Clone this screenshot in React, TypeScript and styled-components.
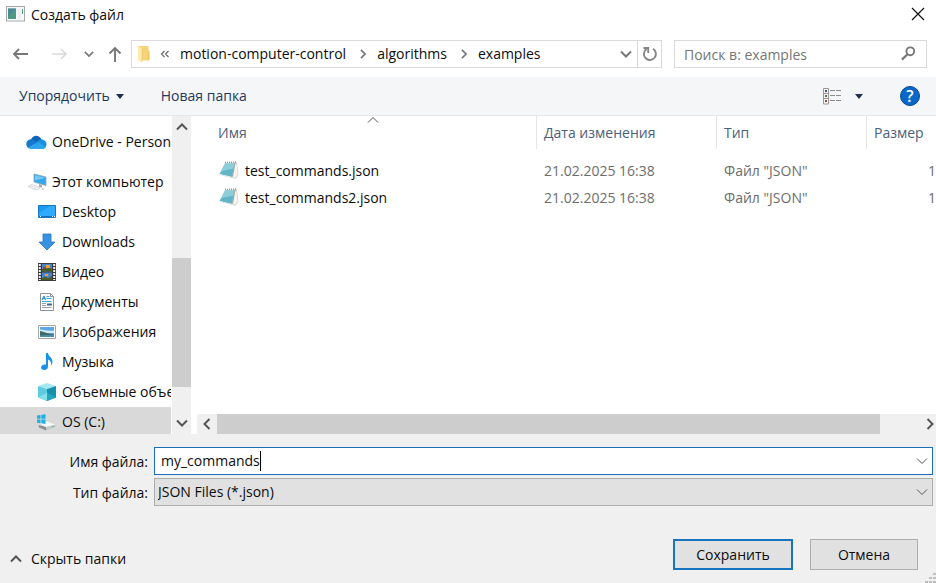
import React, { useState } from "react";
import styled, { createGlobalStyle } from "styled-components";

const GlobalStyle = createGlobalStyle`
  *, *::before, *::after { box-sizing: border-box; }
  body { margin: 0; background: #fff; }
  body, button, input, select {
    font-family: "Open Sans", "Noto Sans", sans-serif;
    font-size: 14px;
    line-height: 20px;
    color: #0c0c0c;
  }
  button { background: none; border: 0; padding: 0; margin: 0; }
  svg { display: block; flex: none; }
`;

const Dialog = styled.main`
  display: flex;
  flex-direction: column;
  height: 100vh;
  min-height: 440px;
  overflow: hidden;
  background: #fff;
`;

const TitleBar = styled.header`
  display: flex;
  align-items: center;
  gap: 6px;
  height: 28px;
  padding: 0 11px 0 6px;
`;

const Title = styled.h1`
  flex: 1;
  margin: 0;
  padding-top: 2px;
  font-size: 14px;
  font-weight: 400;
  line-height: 20px;
`;

const NavBar = styled.nav`
  display: flex;
  align-items: center;
  height: 49px;
  padding: 2px 9px 0 12px;
`;

const NavButton = styled.button<{ $gap: number }>`
  display: flex;
  flex: none;
  margin-right: ${(p) => p.$gap}px;
`;

const AddressBar = styled.div`
  display: flex;
  align-items: center;
  flex: 1;
  min-width: 0;
  height: 28px;
  margin-right: 12px;
  padding-left: 5px;
  border: 1px solid #d9d9d9;
`;

const Crumbs = styled.ol`
  display: flex;
  align-items: center;
  flex: 1;
  gap: 10px;
  min-width: 0;
  margin: 0;
  padding: 0 0 0 10px;
  overflow: hidden;
  list-style: none;
`;

const Crumb = styled.li`
  display: flex;
  align-items: center;
  gap: 9px;
  white-space: nowrap;
`;

const CrumbButton = styled.button`
  font-size: 14px;
  padding-right: 2px;
`;

const RefreshButton = styled.button`
  display: flex;
  align-items: center;
  justify-content: center;
  width: 24px;
  height: 26px;
  margin-left: 5px;
  border-left: 1px solid #d9d9d9;
`;

const SearchBox = styled.label`
  display: flex;
  align-items: center;
  flex: 0 1 253px;
  height: 28px;
  padding: 0 10px 0 9px;
  border: 1px solid #d9d9d9;
`;

const SearchInput = styled.input`
  flex: 1;
  min-width: 0;
  padding: 2px 0 0;
  border: 0;
  outline: 0;
  background: none;
  &::placeholder { color: #757575; opacity: 1; }
`;

const Toolbar = styled.div`
  display: flex;
  align-items: center;
  height: 39px;
  padding: 0 16px 0 19px;
  background: #f5f6f7;
  border-bottom: 1px solid #e6e8e9;
`;

const ToolButton = styled.button<{ $gap?: number; $push?: boolean }>`
  display: flex;
  align-items: center;
  gap: 6px;
  margin-right: ${(p) => p.$gap ?? 0}px;
  margin-left: ${(p) => (p.$push ? "auto" : "0")};
  color: #1e395b;
`;

const HelpButton = styled.button`
  display: flex;
  align-items: center;
  justify-content: center;
  width: 20px;
  height: 20px;
  border: 1px solid #0a4a94;
  border-radius: 50%;
  background: #0a66c8;
  color: #fff;
  font-size: 16px;
  font-weight: 600;
`;

const Body = styled.div`
  display: flex;
  flex: 1;
  min-height: 0;
`;

const Sidebar = styled.aside`
  display: flex;
  width: 197px;
  flex: none;
  overflow: hidden;
`;

const Tree = styled.ul`
  flex: 1;
  min-width: 0;
  margin: 0;
  padding: 11px 1px 0 0;
  overflow: hidden;
  list-style: none;
`;

const TreeNode = styled.li<{ $root?: boolean }>`
  margin-bottom: ${(p) => (p.$root ? 10 : 0)}px;
`;

const TreeButton = styled.button<{ $depth: number; $selected?: boolean }>`
  display: flex;
  align-items: center;
  gap: ${(p) => (p.$depth ? 6 : 5)}px;
  width: 100%;
  height: 30px;
  padding-left: ${(p) => (p.$depth ? 37 : 26)}px;
  overflow: hidden;
  white-space: nowrap;
  background: ${(p) => (p.$selected ? "#d9d9d9" : "transparent")};
`;

const VerticalTrack = styled.div`
  display: flex;
  flex-direction: column;
  align-items: center;
  width: 19px;
  margin-right: 6px;
  background: #f0f0f0;
`;

const HorizontalTrack = styled.div`
  display: flex;
  align-items: center;
  height: 20px;
  background: #f0f0f0;
`;

const ScrollButton = styled.button<{ $end?: boolean }>`
  display: flex;
  align-items: center;
  justify-content: ${(p) => (p.$end ? "flex-end" : "center")};
  flex: none;
  width: 20px;
  height: 22px;
`;

const Rail = styled.div<{ $vertical?: boolean }>`
  display: flex;
  flex-direction: ${(p) => (p.$vertical ? "column" : "row")};
  flex: 1;
  align-self: stretch;
`;

const Space = styled.div<{ $grow: number }>`
  flex: ${(p) => p.$grow} 1 0;
`;

const Thumb = styled.div<{ $grow: number }>`
  flex: ${(p) => p.$grow} 1 0;
  background: #cdcdcd;
`;

const FilePane = styled.section`
  display: flex;
  flex-direction: column;
  flex: 1;
  min-width: 0;
`;

const TableArea = styled.div`
  flex: 1;
  min-height: 0;
  overflow: hidden;
`;

const FileTable = styled.table`
  width: 100%;
  table-layout: fixed;
  border-collapse: separate;
  border-spacing: 0;
  thead tr { height: 33px; }
  tbody tr { height: 27px; }
  tbody::before { content: ""; display: block; height: 8px; }
`;

const HeadCell = styled.th<{ $width?: number; $first?: boolean }>`
  position: relative;
  width: ${(p) => (p.$width ? `${p.$width}px` : "auto")};
  padding: 1px 0 0 ${(p) => (p.$first ? 21 : 7)}px;
  border-left: ${(p) => (p.$first ? "0" : "1px solid #e5e5e5")};
  color: #4c607a;
  font-weight: 400;
  text-align: left;
  white-space: nowrap;
`;

const SortMark = styled.span`
  position: absolute;
  top: -2px;
  left: 50%;
`;

const Cell = styled.td<{ $name?: boolean; $end?: boolean }>`
  padding: 0 0 0 ${(p) => (p.$name ? 22 : 8)}px;
  color: ${(p) => (p.$name ? "#0c0c0c" : "#6d6d6d")};
  text-align: ${(p) => (p.$end ? "right" : "left")};
  white-space: nowrap;
`;

const FileName = styled.div`
  display: flex;
  align-items: center;
  gap: 6px;
`;

const Footer = styled.footer`
  padding: 13px 3px 0 0;
  background: #f0f0f0;
`;

const Fields = styled.div`
  display: grid;
  grid-template-columns: 148px 1fr;
  column-gap: 6px;
  row-gap: 3px;
  align-items: center;
`;

const FieldLabel = styled.label`
  padding-top: 1px;
  text-align: right;
  white-space: nowrap;
`;

const NameBox = styled.div`
  display: flex;
  align-items: center;
  height: 28px;
  padding: 0 4px 0 6px;
  background: #fff;
  border: 1px solid #1c6fb5;
`;

const NameInput = styled.input`
  field-sizing: content;
  min-width: 1px;
  padding: 0;
  border: 0;
  outline: 0;
  background: none;
  caret-color: transparent;
`;

const Caret = styled.span`
  width: 1px;
  height: 20px;
  background: #000;
`;

const DropButton = styled.button`
  display: flex;
  margin-left: auto;
`;

const TypeBox = styled.div`
  position: relative;
  height: 28px;
`;

const TypeSelect = styled.select`
  appearance: none;
  display: block;
  width: 100%;
  height: 28px;
  padding: 0 24px 0 3px;
  border: 1px solid #adadad;
  border-radius: 0;
  background: #e1e1e1;
`;

const TypeArrow = styled.span`
  position: absolute;
  top: 8px;
  right: 5px;
  pointer-events: none;
`;

const Actions = styled.div`
  display: flex;
  align-items: center;
  gap: 17px;
  height: 77px;
  padding: 20px 15px 0 10px;
`;

const HideButton = styled.button`
  display: flex;
  align-items: center;
  gap: 9px;
  margin: 8px auto 0 0;
`;

const ActionButton = styled.button<{ $primary?: boolean }>`
  width: ${(p) => (p.$primary ? 120 : 108)}px;
  height: 31px;
  background: #e1e1e1;
  border: ${(p) => (p.$primary ? "2px solid #1874bd" : "1px solid #adadad")};
`;

const GripCorner = styled.div`
  position: fixed;
  right: 0;
  bottom: 0;
`;

type Dir = "up" | "down" | "left" | "right";

const chevrons: Record<Dir, string> = {
  up: "M1 8.5 6 3.5l5 5",
  down: "M1 3.5 6 8.5l5-5",
  left: "M8.5 1 3.5 6l5 5",
  right: "M3.5 1 8.5 6l-5 5",
};

const Chevron = ({ dir, size = 12, color = "#555", weight = 2 }: { dir: Dir; size?: number; color?: string; weight?: number }) => (
  <svg width={size} height={size} viewBox="0 0 12 12" fill="none" stroke={color} strokeWidth={weight}>
    <path d={chevrons[dir]} />
  </svg>
);

const Triangle = () => (
  <svg width="8" height="5" viewBox="0 0 8 5"><path d="M0 0h8L4 5z" fill="#1e2f50" /></svg>
);

const AppIcon = () => (
  <svg width="19" height="16" viewBox="0 0 19 16">
    <rect x=".5" y=".5" width="18" height="14.5" fill="#f8f9fa" stroke="#a5a9ae" />
    <rect x="2" y="2.500" width="8" height="10.500" fill="#4f9a84" />
    <path d="M2 2.500h8L2 11z" fill="#4a82a0" opacity=".7" />
    <path d="M12 2.500h3V13h-3z" fill="#eceff1" />
    <path d="M16.500 3v5" stroke="#55a36f" />
  </svg>
);

const ArrowLeft = () => (
  <svg width="17" height="14" viewBox="0 0 17 14" fill="none" stroke="#767676" strokeWidth="1.8"><path d="M16 7H2M7 2 2 7l5 5" /></svg>
);
const ArrowRight = () => (
  <svg width="17" height="14" viewBox="0 0 17 14" fill="none" stroke="#dadada" strokeWidth="1.6"><path d="M1 7h14M10 2l5 5-5 5" /></svg>
);
const ArrowUp = () => (
  <svg width="14" height="16" viewBox="0 0 14 16" fill="none" stroke="#767676" strokeWidth="1.9"><path d="M7 16V2M1.500 7.500 7 2l5.500 5.500" /></svg>
);

const CloseIcon = () => (
  <svg width="14" height="14" viewBox="0 0 14 14" stroke="#111" strokeWidth="1.2"><path d="m1 1 12 12M13 1 1 13" /></svg>
);

const FolderIcon = () => (
  <svg width="13" height="18" viewBox="0 0 13 18">
    <path d="M1 1h10.500v14.500H4z" fill="#f5d477" />
    <path d="M11 5.500 12.500 6v9.500H11z" fill="#efc65f" />
    <path d="m1 1 4 2.500V17.500L1 15.500z" fill="#fdebb2" />
    <path d="M5 3.500V17" stroke="#ebc364" strokeWidth=".6" />
  </svg>
);

const BackChevrons = () => (
  <svg width="10" height="8" viewBox="0 0 10 8" fill="none" stroke="#666" strokeWidth="1.2"><path d="M4.500 1l-3 3 3 3M8.500 1l-3 3 3 3" /></svg>
);

const RefreshIcon = () => (
  <svg width="16" height="16" viewBox="0 0 16 16" fill="none" stroke="#858585" strokeWidth="1.9">
    <path d="M11 2.800a6 6 0 1 1-6.500.2" /><path d="M1.500 2h4.700v5" />
  </svg>
);

const SearchIcon = () => (
  <svg width="15" height="15" viewBox="0 0 15 15" fill="none" stroke="#777"><circle cx="9.300" cy="5.300" r="3.900" strokeWidth="1.900" /><path d="M6.500 8.200.9 13.600" strokeWidth="2.200" /></svg>
);

const ViewIcon = () => (
  <svg width="19" height="17" viewBox="0 0 19 17" fill="none">
    <path d="M.5.500h5v15.500h-5zM.5 5.500h5M.5 10.500h5" stroke="#9c9591" />
    <path d="M2 2h2v2H2z" fill="#355b85" /><path d="M2 7h2v2H2z" fill="#55705b" /><path d="M2 12h2v2H2z" fill="#94493d" />
    <path d="M7 2.500h5M13 2.500h5M7 7.500h5M13 7.500h5M7 12.500h5M13 12.500h5" stroke="#8a8a8a" />
  </svg>
);

const CloudIcon = () => (
  <svg width="21" height="15" viewBox="0 0 21 15">
    <path d="M5 4.500C7-.3 13-.8 15.500 4.500L10 10 1.500 7.500Z" fill="#0f64b6" />
    <path d="M15 4.300c3 .2 5.500 2 5.500 5s-2 4.700-4.500 4.700L8 8z" fill="#1b90e0" />
    <path d="M4.800 4.300C2 4.600.3 6.500.3 9.100c0 1.700.8 3 2 3.900L12 7 9 5.500c-1.300-.8-2.700-1.300-4.200-1.200z" fill="#1479cf" />
    <path d="m12.200 7 7.200 5c-.8 1.200-2 2-3.800 2H5c-1.200 0-2.200-.5-3-1.200z" fill="#2ba4ec" />
  </svg>
);

const ComputerIcon = () => (
  <svg width="21" height="18" viewBox="0 0 21 18">
    <path d="m8 1 12 3v8.500L8 9z" fill="#35a7ea" stroke="#8ba3b5" strokeWidth=".8" />
    <path d="m9 2.200 10.500 2.500L9 7.500z" fill="#76c8f5" />
    <path d="m13 11 3 1v2.500l-3-.8z" fill="#aaa" />
    <path d="m2 13.500 4-2 8.500 3-4 2.500z" fill="#e0e2e4" stroke="#c3c6c8" strokeWidth=".6" />
    <path d="m4 13.500 8 2.500M6 12.500l7 2.500" stroke="#fff" strokeWidth=".6" />
    <path d="m16.500 15 2.500 1-2 1-2-1z" fill="#c9cccd" />
  </svg>
);

const DesktopIcon = () => (
  <svg width="19" height="18" viewBox="0 0 19 18">
    <path d="M1.500 2.500h17v12h-17z" fill="#1a9af5" stroke="#1477bd" />
    <path d="M2 10 13 3h5v11H2z" fill="#2faaff" />
    <path d="M2 13.500h16" stroke="#0d72bf" /><path d="M3 13.500h1M15 13.500h1M17 13.500h1" stroke="#fff" />
  </svg>
);

const DownloadIcon = () => (
  <svg width="19" height="18" viewBox="0 0 19 18"><path d="M6 1h8v8h4l-8 8-8-8h4z" fill="#3792e3" stroke="#2875b9" strokeWidth=".8" /></svg>
);

const VideoIcon = () => (
  <svg width="19" height="18" viewBox="0 0 19 18">
    <path d="M1 0h18v18H1z" fill="#3b3b3b" />
    <path d="M2.800 1v16M17.200 1v16" stroke="#f2f2f2" strokeWidth="2" strokeDasharray="2 1" />
    <path d="M5 1h10v7.500H5zM5 9.500h10V17H5z" fill="#4a82cc" />
    <path d="M5 6.500 8 4l2 2 2-2 3 2v2.500H5zM5 15.500l3-2 3 1.500 4-2V17H5z" fill="#4b5d26" />
    <path d="M9 2h4v3H9zM8 11h3v2H8z" fill="#e3a537" /><path d="M6 4h2v2H6z" fill="#b03b2c" />
  </svg>
);

const DocumentIcon = () => (
  <svg width="19" height="18" viewBox="0 0 19 18" fill="none">
    <path d="M3.500.5h10l3 3v14h-13z" fill="#fafafa" stroke="#8f9397" />
    <path d="M13.500.5v3h3" stroke="#8f9397" />
    <path d="m5 7 2-4 1.500 4M5.500 5.700h3" stroke="#168ac9" />
    <path d="M9.500 3.500h3M9.500 5.500h5M5 8.500h9.500" stroke="#39a6da" />
    <path d="M5 10.500h4M5 12.500h4M5 14.500h9.500" stroke="#9aa0a5" /><path d="M10 10.500h5v2h-5z" fill="#42678b" />
  </svg>
);

const PictureIcon = () => (
  <svg width="19" height="18" viewBox="0 0 19 18">
    <path d="M1.500 2.500h17v13h-17z" fill="#fff" stroke="#a2a5a8" />
    <path d="M3 4h14v10H3z" fill="#5ba7e6" /><path d="M3 6.500c4 0 7 2 14 1V10H3z" fill="#d4ebf3" />
    <path d="M3 8c3 .2 6 2 9 2.500l5 1v2.500H3z" fill="#3e6966" /><path d="M3 12.500 17 11.500V14H3z" fill="#4c8ea8" />
  </svg>
);

const MusicIcon = () => (
  <svg width="19" height="18" viewBox="0 0 19 18">
    <path d="M9 0h2c.3 3.500 4.500 4.500 4.500 8.500 0 1.500-.6 3-1.500 4 .5-3-.3-5-3-6v7c0 2-1.600 3.500-3.600 3.500S4 16 4 14.500s1.700-3 3.400-3c.5 0 1.100.1 1.600.3z" fill="#1b92ea" />
  </svg>
);

const CubeIcon = () => (
  <svg width="19" height="18" viewBox="0 0 19 18">
    <path d="m1 3 9-3 9 3-9 3z" fill="#a4e9f2" /><path d="m1 3 9 3v12l-9-3.500z" fill="#5ccbdd" />
    <path d="m19 3-9 3v12l9-3.500z" fill="#178fae" /><path d="m1 14.500 9-5V18z" fill="#85e0ea" />
    <path d="m10 9.500 9 5-9 3.500z" fill="#25a6c0" />
  </svg>
);

const DriveIcon = () => (
  <svg width="19" height="18" viewBox="0 0 19 18">
    <path d="m3 10 7-1.500 8.500 3L9 14.500z" fill="#f6f7f7" /><path d="m1.500 12 7.500 2v3.500l-7-3z" fill="#8b8f92" />
    <path d="m9 14 9.500-2.500V14L9 17.500z" fill="#c4c7c9" /><path d="m15 14 2-.6" stroke="#4fc36c" />
    <path d="M0 2.500 3.500 2v3.700H0zM4.300 1.900 8.500 1v4.700H4.300zM0 6.500h3.500v3.700L0 9.700zM4.300 6.500h4.200v4.400l-4.200-.6z" fill="#1fb1e2" />
  </svg>
);

const NotepadIcon = () => (
  <svg width="20" height="22" viewBox="0 0 20 22">
    <path d="m15 2.500 3-.5 1.500 13-3 4-4-2.500z" fill="#d9dad4" />
    <path d="m16 4 1.500 1 1 9.500-2.500 3.500-2-2z" fill="#f7f5ee" />
    <path d="M6 3.500 15.500 3 13 17 .5 14z" fill="#62b4c6" />
    <path d="M6 3.500 15.500 3 14.500 8.500 3 11 .5 14z" fill="#9fd7e0" opacity=".7" />
    <path d="m.5 14 12.500 3 1.500.5L16.500 19 1 15z" fill="#d5e4e4" />
    <path d="M6 2.500 18 2" stroke="#8b9293" strokeDasharray="1 1" strokeWidth="1.5" />
    <path d="m16 3-2.500 13.500" stroke="#8f9b98" strokeWidth=".8" />
  </svg>
);

const GripIcon = () => (
  <svg width="11" height="10" viewBox="0 0 11 10" fill="#bdbdbd">
    <path d="M8 0h3v2H8zM4 4h3v2H4zM8 4h3v2H8zM0 8h3v2H0zM4 8h3v2H4zM8 8h3v2H8z" />
  </svg>
);

const places = [
  { label: "OneDrive - Person", icon: <CloudIcon />, depth: 0, gapAfter: true },
  { label: "Этот компьютер", icon: <ComputerIcon />, depth: 0 },
  { label: "Desktop", icon: <DesktopIcon />, depth: 1 },
  { label: "Downloads", icon: <DownloadIcon />, depth: 1 },
  { label: "Видео", icon: <VideoIcon />, depth: 1 },
  { label: "Документы", icon: <DocumentIcon />, depth: 1 },
  { label: "Изображения", icon: <PictureIcon />, depth: 1 },
  { label: "Музыка", icon: <MusicIcon />, depth: 1 },
  { label: "Объемные объекты", icon: <CubeIcon />, depth: 1 },
  { label: "OS (C:)", icon: <DriveIcon />, depth: 1, selected: true },
];

const files = [
  { name: "test_commands.json", date: "21.02.2025 16:38", type: 'Файл "JSON"', size: "1" },
  { name: "test_commands2.json", date: "21.02.2025 16:38", type: 'Файл "JSON"', size: "1" },
];

const path = ["motion-computer-control", "algorithms", "examples"];

export default function App() {
  const [name, setName] = useState("my_commands");
  return (
    <Dialog>
      <GlobalStyle />
      <TitleBar>
        <AppIcon />
        <Title>Создать файл</Title>
        <button aria-label="Закрыть"><CloseIcon /></button>
      </TitleBar>

      <NavBar>
        <NavButton $gap={22} aria-label="Назад"><ArrowLeft /></NavButton>
        <NavButton $gap={16} aria-label="Вперед"><ArrowRight /></NavButton>
        <NavButton $gap={14} aria-label="Последние расположения"><Chevron dir="down" size={10} color="#777" /></NavButton>
        <NavButton $gap={9} aria-label="Вверх"><ArrowUp /></NavButton>
        <AddressBar>
          <FolderIcon />
          <Crumbs>
            <Crumb><BackChevrons /></Crumb>
            {path.map((part, i) => (
              <Crumb key={part}>
                {i > 0 && <Chevron dir="right" size={10} color="#777" />}
                <CrumbButton>{part}</CrumbButton>
              </Crumb>
            ))}
          </Crumbs>
          <button aria-label="Предыдущие расположения"><Chevron dir="down" color="#777" /></button>
          <RefreshButton aria-label="Обновить"><RefreshIcon /></RefreshButton>
        </AddressBar>
        <SearchBox>
          <SearchInput aria-label="Поиск" placeholder="Поиск в: examples" />
          <SearchIcon />
        </SearchBox>
      </NavBar>

      <Toolbar>
        <ToolButton $gap={37}>Упорядочить<Triangle /></ToolButton>
        <ToolButton>Новая папка</ToolButton>
        <ToolButton $push $gap={13} aria-label="Изменить представление"><ViewIcon /></ToolButton>
        <ToolButton $gap={37} aria-label="Другие параметры"><Triangle /></ToolButton>
        <HelpButton aria-label="Справка">?</HelpButton>
      </Toolbar>

      <Body>
        <Sidebar>
          <Tree>
            {places.map((p) => (
              <TreeNode key={p.label} $root={p.gapAfter}>
                <TreeButton $depth={p.depth} $selected={p.selected}>{p.icon}{p.label}</TreeButton>
              </TreeNode>
            ))}
          </Tree>
          <VerticalTrack>
            <ScrollButton aria-label="Прокрутить вверх"><Chevron dir="up" /></ScrollButton>
            <Rail $vertical>
              <Space $grow={120} />
              <Thumb $grow={129} />
              <Space $grow={25} />
            </Rail>
            <ScrollButton aria-label="Прокрутить вниз"><Chevron dir="down" /></ScrollButton>
          </VerticalTrack>
        </Sidebar>

        <FilePane>
          <TableArea>
            <FileTable>
              <thead>
                <tr>
                  <HeadCell $first>Имя<SortMark><Chevron dir="up" weight={1} /></SortMark></HeadCell>
                  <HeadCell $width={180}>Дата изменения</HeadCell>
                  <HeadCell $width={150}>Тип</HeadCell>
                  <HeadCell $width={70}>Размер</HeadCell>
                </tr>
              </thead>
              <tbody>
                {files.map((f) => (
                  <tr key={f.name}>
                    <Cell $name><FileName><NotepadIcon />{f.name}</FileName></Cell>
                    <Cell>{f.date}</Cell>
                    <Cell>{f.type}</Cell>
                    <Cell $end>{f.size}</Cell>
                  </tr>
                ))}
              </tbody>
            </FileTable>
          </TableArea>
          <HorizontalTrack>
            <ScrollButton aria-label="Прокрутить влево"><Chevron dir="left" /></ScrollButton>
            <Rail>
              <Thumb $grow={663} />
              <Space $grow={36} />
            </Rail>
            <ScrollButton $end aria-label="Прокрутить вправо"><Chevron dir="right" /></ScrollButton>
          </HorizontalTrack>
        </FilePane>
      </Body>

      <Footer>
        <Fields>
          <FieldLabel htmlFor="file-name">Имя файла:</FieldLabel>
          <NameBox>
            <NameInput id="file-name" value={name} onChange={(e) => setName(e.target.value)} />
            <Caret />
            <DropButton aria-label="Недавние имена"><Chevron dir="down" weight={1} /></DropButton>
          </NameBox>
          <FieldLabel htmlFor="file-type">Тип файла:</FieldLabel>
          <TypeBox>
            <TypeSelect id="file-type"><option>JSON Files (*.json)</option></TypeSelect>
            <TypeArrow><Chevron dir="down" weight={1} /></TypeArrow>
          </TypeBox>
        </Fields>
        <Actions>
          <HideButton><Chevron dir="up" />Скрыть папки</HideButton>
          <ActionButton $primary>Сохранить</ActionButton>
          <ActionButton>Отмена</ActionButton>
        </Actions>
      </Footer>
      <GripCorner><GripIcon /></GripCorner>
    </Dialog>
  );
}
